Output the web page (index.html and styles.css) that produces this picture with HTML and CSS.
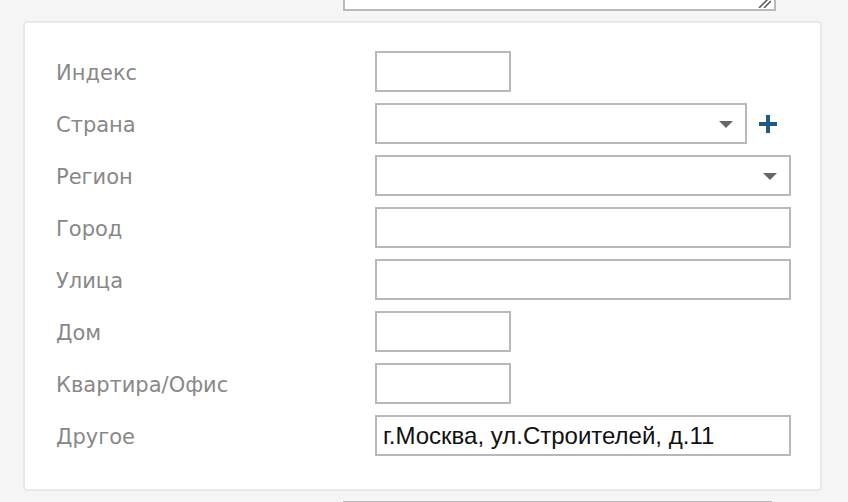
FILE: index.html
```html
<!DOCTYPE html>
<html lang="ru">
<head>
<meta charset="utf-8">
<link rel="stylesheet" href="styles.css">
</head>
<body>
<div class="page">
  <div class="top-area">
    <div class="textarea">
      <svg class="grip" width="14" height="10" viewBox="0 0 14 10"><path d="M2 10 L11 1 M7 10 L14 3" stroke="#555" stroke-width="1.5" fill="none"/></svg>
    </div>
  </div>
  <div class="card">
    <div class="form">
      <div class="label">Индекс</div>
      <div class="field"><div class="input short"></div></div>

      <div class="label">Страна</div>
      <div class="field">
        <div class="input select country"><span class="caret"></span></div>
        <svg class="plus" width="20" height="20" viewBox="0 0 20 20"><path d="M10 1 V19 M1 10 H19" stroke="#1e5a8c" stroke-width="4" fill="none"/></svg>
      </div>

      <div class="label">Регион</div>
      <div class="field"><div class="input select wide"><span class="caret"></span></div></div>

      <div class="label">Город</div>
      <div class="field"><div class="input wide"></div></div>

      <div class="label">Улица</div>
      <div class="field"><div class="input wide"></div></div>

      <div class="label">Дом</div>
      <div class="field"><div class="input short"></div></div>

      <div class="label">Квартира/Офис</div>
      <div class="field"><div class="input short"></div></div>

      <div class="label">Другое</div>
      <div class="field"><div class="input wide value">г.Москва, ул.Строителей, д.11</div></div>
    </div>
  </div>
  <div class="bottom-area"><div class="textarea2"></div></div>
</div>
</body>
</html>
```
FILE: styles.css
```css
html, body {
  margin: 0;
  padding: 0;
  background: #f5f5f5;
  height: 502px;
  overflow: hidden;
}
.page {
  padding-left: 23px;
  width: 799px;
}
.top-area {
  padding-left: 320px;
  height: 11px;
  overflow: hidden;
  margin-bottom: 10px;
}
.textarea {
  position: relative;
  margin-top: -30px;
  width: 429px;
  height: 37px;
  border: 2px solid #b9b9b9;
  background: #fff;
}
.grip {
  position: absolute;
  right: 3px;
  bottom: 1px;
}
.card {
  background: #fff;
  border: 2px solid #e8e8e8;
  border-radius: 4px;
  padding: 28px 29px 33px 31px;
}
.form {
  display: grid;
  grid-template-columns: 319px 1fr;
  grid-auto-rows: 41px;
  row-gap: 11px;
}
.label {
  font-family: "DejaVu Sans", Verdana, sans-serif;
  font-size: 21px;
  color: #888;
  display: flex;
  align-items: center;
  padding-top: 2px;
}
.field {
  display: flex;
  align-items: center;
}
.input {
  box-sizing: border-box;
  height: 41px;
  border: 2px solid #b8b8b8;
  background: #fff;
  position: relative;
}
.short { width: 136px; }
.wide { width: 416px; }
.country { width: 372px; }
.caret {
  position: absolute;
  right: 12px;
  top: 16px;
  width: 0;
  height: 0;
  border-left: 7px solid transparent;
  border-right: 7px solid transparent;
  border-top: 7px solid #666;
}
.plus {
  margin-left: 11px;
}
.value {
  font-family: "Liberation Sans", Arial, sans-serif;
  font-size: 24px;
  color: #111;
  display: flex;
  align-items: center;
  padding-left: 6px;
  padding-top: 1px;
}
.bottom-area {
  padding-left: 320px;
  margin-top: 10px;
}
.textarea2 {
  width: 429px;
  height: 0;
  border-top: 2px solid #b9b9b9;
}
```
